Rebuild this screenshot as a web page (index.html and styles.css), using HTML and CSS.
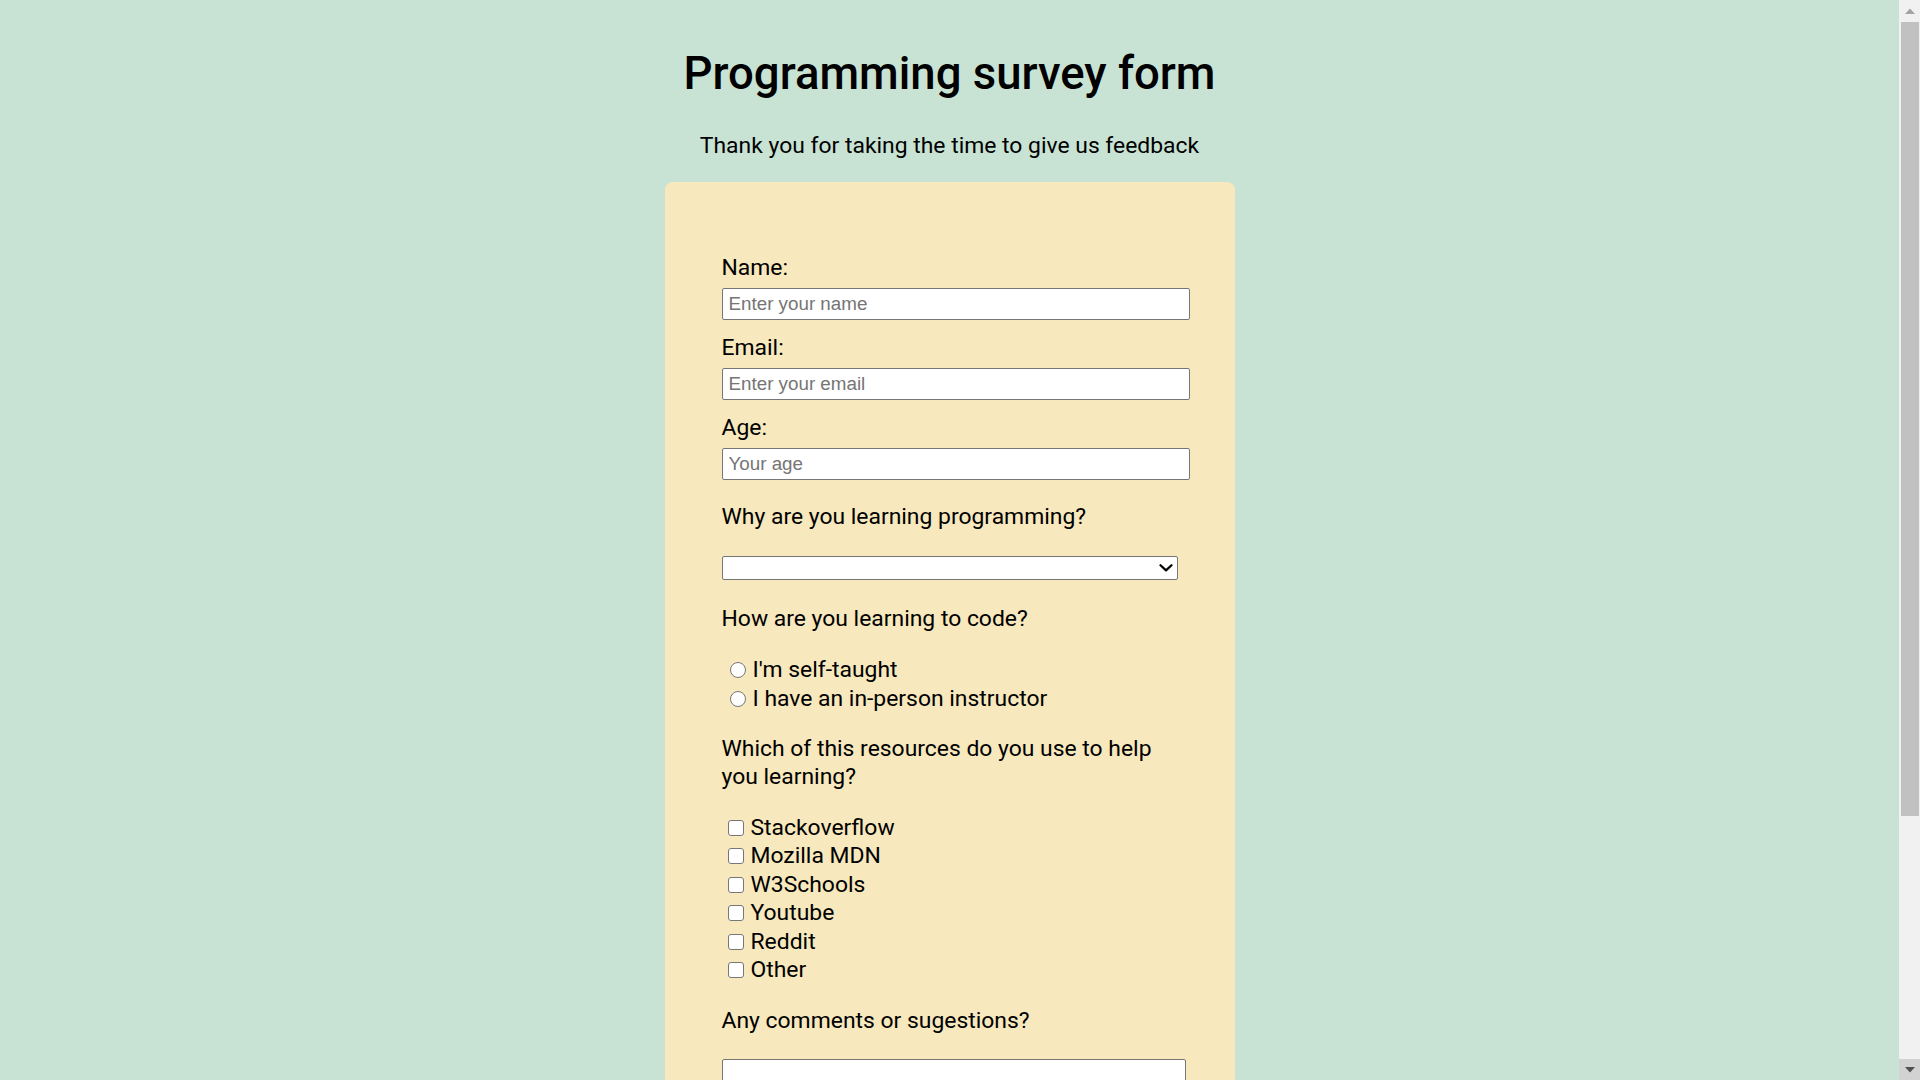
FILE: index.html
```html
<!DOCTYPE html>
<html lang="en">
<head>
<meta charset="utf-8">
<title>Programming survey form</title>
<link rel="stylesheet" href="styles.css">
</head>
<body>
<main class="page">
  <h1 id="title" class="title">Programming survey form</h1>
  <p id="description" class="description">Thank you for taking the time to give us feedback</p>
  <form id="survey-form" class="card">
    <label class="q" for="name" id="name-label">Name:</label>
    <input class="text-input" type="text" id="name" placeholder="Enter your name">
    <label class="q q-next" for="email" id="email-label">Email:</label>
    <input class="text-input" type="email" id="email" placeholder="Enter your email">
    <label class="q q-next" for="number" id="number-label">Age:</label>
    <input class="text-input" type="number" id="number" placeholder="Your age">

    <label class="q q-why" for="dropdown">Why are you learning programming?</label>
    <div class="select-wrap">
      <select id="dropdown" class="dropdown">
        <option value=""></option>
        <option value="job">For a job</option>
        <option value="fun">For fun</option>
      </select>
      <svg class="chevron" width="14" height="8" viewBox="0 0 14 8" aria-hidden="true"><path d="M1.5 1.2 L7 6.4 L12.5 1.2" fill="none" stroke="#000" stroke-width="2.2" stroke-linecap="round" stroke-linejoin="round"/></svg>
    </div>

    <p class="q q-how">How are you learning to code?</p>
    <div class="options radios">
      <label class="option"><input type="radio" name="how" value="self"><span>I'm self-taught</span></label>
      <label class="option"><input type="radio" name="how" value="instructor"><span>I have an in-person instructor</span></label>
    </div>

    <p class="q q-which">Which of this resources do you use to help you learning?</p>
    <div class="options checks">
      <label class="option"><input type="checkbox" value="stackoverflow"><span>Stackoverflow</span></label>
      <label class="option"><input type="checkbox" value="mdn"><span>Mozilla MDN</span></label>
      <label class="option"><input type="checkbox" value="w3schools"><span>W3Schools</span></label>
      <label class="option"><input type="checkbox" value="youtube"><span>Youtube</span></label>
      <label class="option"><input type="checkbox" value="reddit"><span>Reddit</span></label>
      <label class="option"><input type="checkbox" value="other"><span>Other</span></label>
    </div>

    <label class="q q-any" for="comments">Any comments or sugestions?</label>
    <textarea id="comments" class="comments"></textarea>
    <button id="submit" type="submit" class="submit">Submit</button>
  </form>
</main>
<div class="scrollbar" aria-hidden="true">
  <div class="sb-btn sb-up"><svg width="10" height="6" viewBox="0 0 10 6"><path d="M0 6 L5 0.5 L10 6 Z" fill="#a3a3a3"/></svg></div>
  <div class="sb-track"><div class="sb-thumb"></div></div>
  <div class="sb-btn sb-down"><svg width="10" height="6" viewBox="0 0 10 6"><path d="M0 0 L5 5.5 L10 0 Z" fill="#505050"/></svg></div>
</div>
</body>
</html>
```
FILE: styles.css
```css
html, body {
  margin: 0;
  padding: 0;
}

body {
  background: #c8e3d4;
  color: #000;
  font-family: Roboto, "Liberation Sans", Arial, sans-serif;
  padding-right: 21px;
}

.page {
  padding: 47px 0 40px;
  display: flex;
  flex-direction: column;
  align-items: center;
}

.title {
  margin: 0;
  font-size: 45.5px;
  line-height: 54px;
  font-weight: 500;
  text-align: center;
}

.description {
  margin: 32px 0 0;
  font-size: 22.9px;
  line-height: 26px;
  text-align: center;
}

.card {
  box-sizing: border-box;
  width: 570px;
  margin-top: 23px;
  padding: 73px 45px 80px 57px;
  background: #f7e8bd;
  border-radius: 8px;
  display: flex;
  flex-direction: column;
  align-items: flex-start;
}

.q {
  display: block;
  margin: 0;
  font-size: 22.9px;
  line-height: 26px;
}

.q-next { margin-top: 15px; }
.q-why { margin-top: 24px; }
.q-how { margin-top: 26px; }
.q-which {
  margin-top: 22.5px;
  line-height: 28px;
  max-width: 460px;
}
.q-any { margin-top: 24px; }

.text-input {
  box-sizing: border-box;
  width: 468px;
  height: 32px;
  margin-top: 7px;
  padding: 0 6px;
  border: 1px solid #767676;
  border-radius: 2px;
  background: #fff;
  font-family: "Liberation Sans", Arial, sans-serif;
  font-size: 18.8px;
  color: #000;
}

.text-input::placeholder {
  color: #757575;
}

.select-wrap {
  position: relative;
  margin-top: 26px;
  width: 456px;
  height: 24px;
}

.dropdown {
  box-sizing: border-box;
  display: block;
  width: 456px;
  height: 24px;
  margin: 0;
  padding: 0 24px 0 4px;
  border: 1px solid #767676;
  border-radius: 2px;
  background: #fff;
  font-family: "Liberation Sans", Arial, sans-serif;
  font-size: 16.7px;
  appearance: none;
  -webkit-appearance: none;
}

.chevron {
  position: absolute;
  right: 5px;
  top: 8px;
  pointer-events: none;
}

.options {
  display: flex;
  flex-direction: column;
}

.radios { margin-top: 24px; }
.checks { margin-top: 22.5px; }

.option {
  display: flex;
  align-items: center;
  height: 28.4px;
  font-size: 22.9px;
  line-height: 26px;
}

.option input {
  appearance: none;
  -webkit-appearance: none;
  box-sizing: border-box;
  flex: none;
  width: 16px;
  height: 16px;
  background: #fff;
  border: 1.3px solid #767676;
}

.radios input {
  border-radius: 50%;
  margin: 0 7px 0 8px;
}

.checks input {
  border-radius: 3px;
  margin: 0 7px 0 6px;
}

.comments {
  box-sizing: border-box;
  width: 464px;
  height: 170px;
  margin-top: 25px;
  border: 1px solid #767676;
  border-radius: 2px;
  background: #fff;
}

.submit {
  margin-top: 30px;
  padding: 8px 24px;
  font-family: Roboto, "Liberation Sans", Arial, sans-serif;
  font-size: 20px;
  border: 1px solid #767676;
  border-radius: 4px;
  background: #efefef;
}

/* window scrollbar, as it appears in the reference */
.scrollbar {
  position: fixed;
  top: 0;
  right: 0;
  width: 21px;
  height: 100vh;
  background: #f1f1f1;
  display: flex;
  flex-direction: column;
}

.sb-btn {
  flex: none;
  height: 21px;
  display: flex;
  align-items: center;
  justify-content: center;
}

.sb-down {
  background: #d2d2d2;
}

.sb-track {
  flex: 1;
  padding: 1px 1px 0 2px;
}

.sb-thumb {
  height: 794px;
  background: #c1c1c1;
}
```
